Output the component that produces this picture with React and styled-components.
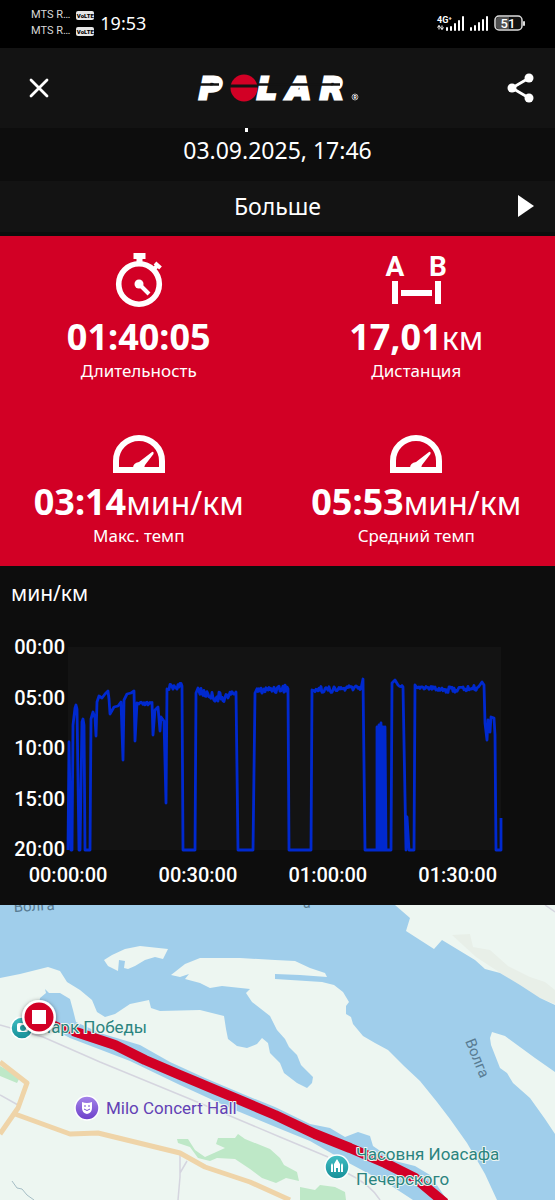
import React from "react";
import styled, { createGlobalStyle } from "styled-components";

const RED = "#d20025";

const GlobalStyle = createGlobalStyle`
  * { box-sizing: border-box; }
  body { margin: 0; background: #0d0d0d; }
  button { border: 0; padding: 0; background: none; color: inherit; font: inherit; cursor: pointer; }
  svg { display: block; overflow: visible; }
`;

const Page = styled.div`
  display: flex;
  flex-direction: column;
  min-height: 100vh;
  background: #0d0d0d;
  color: #fff;
  font-family: "Noto Sans", "Open Sans", sans-serif;
`;

/* ---------- status bar ---------- */

const StatusBar = styled.div`
  display: flex;
  align-items: center;
  justify-content: space-between;
  height: 48px;
  padding: 0 30px 2px 31px;
  background: #000;
  font-family: Roboto, sans-serif;
`;

const StatusGroup = styled.div`
  display: flex;
  align-items: center;
  gap: 6px;
`;

const Carriers = styled.div`
  display: flex;
  flex-direction: column;
`;

const Carrier = styled.div`
  display: flex;
  align-items: center;
  gap: 6px;
  font-size: 11px;
  line-height: 16px;
  color: #d8d8d8;
`;

const Volte = styled.span`
  width: 18px;
  border-radius: 2px;
  background: #e6e6e6;
  color: #000;
  font-size: 6px;
  font-weight: 900;
  line-height: 9px;
  text-align: center;
`;

const Clock = styled.time`
  font-family: "Noto Sans", sans-serif;
  font-size: 18px;
  line-height: 24px;
`;

/* ---------- header ---------- */

const Header = styled.header`
  display: flex;
  align-items: center;
  justify-content: space-between;
  height: 80px;
  padding: 0 20px 0 28px;
  background: #131313;
`;

const Summary = styled.div`
  display: flex;
  flex-direction: column;
  align-items: center;
  height: 53px;
  font-size: 23px;
  line-height: 36px;

  &::before {
    content: "";
    width: 3px;
    height: 4px;
    margin-right: 62px;
    background: #fff;
  }
`;

const MoreButton = styled.button`
  && {
    display: grid;
    grid-template-columns: 1fr auto 1fr;
    align-items: center;
    height: 51px;
    padding: 0 21px 2px;
    margin-bottom: 4px;
    background: #131313;
    font-size: 23px;
    line-height: 32px;
  }
  svg { justify-self: end; }
  span { grid-column: 2; }
`;

/* ---------- stats ---------- */

const Stats = styled.section`
  display: grid;
  grid-template-columns: 1fr 1fr;
  grid-auto-rows: 165px;
  background: ${RED};
`;

const Stat = styled.div`
  display: flex;
  flex-direction: column;
  align-items: center;
`;

const StatIcon = styled.div`
  display: flex;
  align-items: flex-end;
  height: 72px;
`;

const StatValue = styled.div`
  height: 44px;
  margin-top: 7px;
  font-size: 36px;
  line-height: 44px;
  white-space: nowrap;
  strong { font-weight: 700; }
`;

const Unit = styled.span`
  font-size: 32px;
  line-height: 32px;
`;

const StatLabel = styled.div`
  font-size: 17px;
  line-height: 24px;
`;

/* ---------- chart ---------- */

const ChartSection = styled.section`
  padding: 11px 54px 19px 11px;
`;

const ChartTitle = styled.h2`
  margin: 0 0 28px;
  font-size: 21px;
  font-weight: 400;
  line-height: 32px;
`;

const ChartGrid = styled.div`
  display: grid;
  grid-template-columns: 54px 1fr;
  column-gap: 3px;
  font-family: Roboto, sans-serif;
  font-size: 20px;
  font-weight: 500;
  line-height: 22px;
`;

const YAxis = styled.div`
  display: flex;
  flex-direction: column;
  justify-content: space-between;
  align-items: flex-end;
  height: 224px;
  margin-top: -1px;
`;

const Plot = styled.div`
  height: 203px;
  margin-top: 10px;
  background: #131313;
  svg { width: 100%; height: 100%; }
`;

const XAxis = styled.div`
  display: grid;
  grid-template-columns: repeat(4, 1fr);
  grid-column: 2;
  width: 120%;
  margin: 4px 0 0 -15%;
  text-align: center;
`;

/* ---------- map ---------- */

const MapPanel = styled.section`
  display: flex;
  flex: 1 0 295px;
  max-height: 60vw;
  overflow: hidden;
  background: #edf6f1;
  svg { width: 100%; flex: 1; }
`;

const MapText = styled.text`
  font-family: Roboto, sans-serif;
  font-size: ${(p) => p.$size || 17}px;
  fill: ${(p) => p.$color};
  stroke: #edf6f1;
  stroke-width: ${(p) => (p.$plain ? 0 : 2)}px;
  stroke-linejoin: round;
  paint-order: stroke;
`;

const LogoText = styled.text`
  font-family: "DejaVu Sans", sans-serif;
  font-size: 31px;
  font-weight: 700;
  font-style: italic;
  fill: #fff;
  stroke: #fff;
  stroke-width: 3px;
`;

const SmallIconText = styled.text`
  font-family: Roboto, sans-serif;
  font-size: ${(p) => p.$size}px;
  font-weight: ${(p) => p.$weight || 700};
  fill: #fff;
`;

function Signal() {
  return (
    <svg width="18" height="16" viewBox="0 0 18 16" fill="#fff">
      <rect x="0" y="12" width="2" height="4" rx="1" />
      <rect x="4" y="10" width="2" height="6" rx="1" />
      <rect x="8" y="7" width="2" height="9" rx="1" />
      <rect x="12" y="4" width="2" height="12" rx="1" />
      <rect x="16" y="1" width="2" height="15" rx="1" />
    </svg>
  );
}

function MobileSignal() {
  return (
    <svg width="27" height="16" viewBox="0 0 27 16" fill="#fff">
      <SmallIconText x="0" y="8" $size="9">4G⁺</SmallIconText>
      <path d="M2 10.500v4M0.500 12.500 2 10.500l1.500 2M5 10.500v4M3.500 12.500 5 14.500l1.500-2" stroke="#fff" fill="none" />
      <rect x="9" y="12" width="2" height="4" rx="1" />
      <rect x="13" y="11" width="2" height="5" rx="1" />
      <rect x="17" y="8" width="2" height="8" rx="1" />
      <rect x="21" y="5" width="2" height="11" rx="1" />
      <rect x="25" y="1" width="2" height="15" rx="1" />
    </svg>
  );
}

function Battery() {
  return (
    <svg width="31" height="16" viewBox="0 0 31 16">
      <rect x="1" y="1" width="27" height="14" rx="4" fill="#111" stroke="#ddd" strokeWidth="1.500" />
      <path d="M5 2h10v12H5q-3 0-3-3V5q0-3 3-3Z" fill="#505050" />
      <rect x="29" y="6" width="2" height="5" rx="1" fill="#ddd" />
      <SmallIconText x="14" y="13" $size="13" $weight="500" textAnchor="middle">51</SmallIconText>
    </svg>
  );
}

function PolarLogo() {
  return (
    <svg width="166" height="32" viewBox="0 0 166 32" role="img" aria-label="Polar">
      <LogoText x="3" y="27">P</LogoText>
      <LogoText x="61" y="27">L</LogoText>
      <LogoText x="91" y="27">A</LogoText>
      <LogoText x="124" y="27">R</LogoText>
      <path d="M2 12.500h21M60 12.500h84" stroke="#131313" strokeWidth="2.500" />
      <circle cx="48" cy="16" r="13.500" fill={RED} />
      <path d="M34 14h28" stroke="#131313" strokeWidth="3" />
      <circle cx="159" cy="25" r="3" fill="none" stroke="#aaa" />
      <SmallIconText x="157.500" y="27" $size="5">R</SmallIconText>
    </svg>
  );
}

function StopwatchIcon() {
  return (
    <svg width="48" height="56" viewBox="0 0 48 56">
      <circle cx="24" cy="32" r="20.300" fill="none" stroke="#fff" strokeWidth="5.600" />
      <path d="M18.500 1h12v6h-3v4h-6V7h-3Z" fill="#fff" />
      <path d="m38 18 5-5M40 11l5.500 5" stroke="#fff" strokeWidth="4" />
      <circle cx="24" cy="32" r="4.500" fill="#fff" />
      <path d="m24 32 10 10" stroke="#fff" strokeWidth="4" />
    </svg>
  );
}

function DistanceIcon() {
  return (
    <svg width="60" height="56" viewBox="0 0 60 56" fill="#fff">
      <SmallIconText x="9" y="24" $size="28" textAnchor="middle">A</SmallIconText>
      <SmallIconText x="52" y="24" $size="28" textAnchor="middle">B</SmallIconText>
      <path d="M6 29h6v23H6ZM49 29h6v23h-6ZM15 38h31v6H15Z" />
    </svg>
  );
}

function GaugeIcon() {
  return (
    <svg width="52" height="38" viewBox="0 0 52 38">
      <path d="M3 35V26a23 23 0 0 1 46 0v9Z" fill="none" stroke="#fff" strokeWidth="6" />
      <path d="M20 33q0-5 6-6L39 17q2-1 1.500 2L32 30l-1 3Z" fill="#fff" />
    </svg>
  );
}

const stats = [
  { icon: <StopwatchIcon />, value: "01:40:05", unit: "", label: "Длительность" },
  { icon: <DistanceIcon />, value: "17,01", unit: "км", label: "Дистанция" },
  { icon: <GaugeIcon />, value: "03:14", unit: "мин/км", label: "Макс. темп" },
  { icon: <GaugeIcon />, value: "05:53", unit: "мин/км", label: "Средний темп" },
];

const yTicks = ["00:00", "05:00", "10:00", "15:00", "20:00"];
const xTicks = ["00:00:00", "00:30:00", "01:00:00", "01:30:00"];

/* A steady stretch of running: a line from y1 to y2 with an irregular ripple. */
function steady(x1, x2, y1, y2, amp) {
  const points = [];
  for (let x = x1; x <= x2; x += 1) {
    const t = (x - x1) / (x2 - x1);
    const noise = Math.sin(x * 12.9898) * 43758.5453;
    const ripple = (noise - Math.floor(noise) - 0.5) * 2 * amp;
    points.push([x, y1 + (y2 - y1) * t + ripple]);
  }
  return points;
}

const pace = [
  [0, 203], [1, 95], [3, 203], [4, 203], [5, 78], [7, 61], [8, 58], [9, 62], [11, 203], [12, 203],
  [14, 75], [15, 72], [16, 78], [17, 203], [22, 203], [23, 72], [25, 65], [27, 71], [28, 89],
  [29, 55], [31, 49], [34, 51], [37, 47], [40, 44], [41, 52], [42, 67], [46, 60], [50, 59],
  [53, 55], [55, 113], [56, 53], [59, 47], [63, 46], [66, 44], [67, 94], [69, 56],
  ...steady(71, 84, 57, 57, 2), [85, 88], [87, 63], [90, 60], [92, 84], [93, 70], [96, 74],
  [98, 156], [99, 42], ...steady(101, 114, 40, 39, 3), [115, 203], [127, 203], [128, 46], [130, 41],
  ...steady(132, 145, 45, 49, 4), ...steady(146, 158, 50, 50, 5), ...steady(159, 168, 49, 45, 3),
  [170, 203], [185, 203], [187, 46], ...steady(189, 205, 44, 42, 3), ...steady(206, 220, 42, 41, 4),
  [221, 203], [243, 203], [244, 43], ...steady(246, 270, 42, 43, 3), ...steady(271, 293, 42, 40, 3),
  [295, 32], [297, 203], [309, 203], [309, 80], [310, 203], [311, 78], [312, 203], [313, 76],
  [314, 203], [315, 80], [316, 203], [317, 80], [318, 203], [323, 203], [324, 36], [327, 33],
  [330, 38], ...steady(331, 335, 39, 39, 1), [337, 150], [338, 203], [339, 170], [341, 203],
  [346, 203], [347, 38], ...steady(349, 375, 40, 42, 2), ...steady(376, 411, 43, 41, 3),
  [414, 35], [416, 38], [417, 76], [419, 93], [420, 73], [422, 85], [423, 70], [426, 71], [427, 88],
  [428, 203], [433, 203], [433, 171],
];

const paceLine = pace.map(([x, y]) => `${x},${y.toFixed(1)}`).join(" ");

function RouteMap() {
  const water = "#a0ceeb";
  const land = "#edf6f1";
  return (
    <svg viewBox="0 905 555 295" preserveAspectRatio="xMidYMid slice">
      <defs>
        <linearGradient id="teal" x2="0" y2="1">
          <stop stopColor="#42bfc4" />
          <stop offset="1" stopColor="#168f98" />
        </linearGradient>
        <linearGradient id="purple" x2="0" y2="1">
          <stop stopColor="#a585ea" />
          <stop offset="1" stopColor="#6c3fc9" />
        </linearGradient>
        <filter id="shadow" x="-40%" y="-40%" width="180%" height="180%">
          <feDropShadow dx="0" dy="1" stdDeviation="2" floodOpacity="0.5" />
        </filter>
      </defs>

      <rect y="905" width="555" height="295" fill={land} />
      <path d="M452 935 470 934 473 947 490 950 508 966 530 977 545 982 555 990V1004L530 994 502 974 476 957Z" fill="#e8efe8" />
      <path
        fill={water}
        d="M0 905H395L410 918 406 931 434 949 442 940 475 960 485 969 500 973 520 985 540 998 555 1005V1072L535 1058 505 1036 492 1032 490 1038 491 1045 500 1068 507 1073 513 1083 530 1098 545 1119 555 1134V1200H497L485 1174 467 1143 450 1119 437 1102 420 1081 404 1066 388 1050 375 1043 363 1036 353 1024 351 1017 346 1014V1006L349 1002 343 992 334 985 322 982 275 979 275 974 300 975 327 977 325 973 310 968 295 961 275 960 240 958 200 958 185 964 171 975 180 977 189 974 185 979 200 983 210 988 222 986 250 989 246 993 252 1002 270 1016 277 1030 285 1039 289 1047 297 1055 301 1065 313 1077 312 1083 307 1088 297 1083 284 1073 280 1063 270 1053 268 1043 262 1038 257 1044 247 1048 237 1046 228 1039 226 1029 224 1016 200 1010 160 1011 151 1008 149 1000 130 1004 115 1014 105 1017 97 1012 92 1000 80 990 67 982 60 971 48 967 20 974 0 978Z"
      />
      <path d="M104 960 112 955 125 949 140 946 168 949 163 959 155 957 145 960 135 966 128 969 124 968 125 961 119 960 118 971 108 966Z" fill={land} />
      <path
        fill={water}
        d="M40 998 46 993 45 989 49 993H60L70 999 73 1010 76 1022 100 1033 140 1045 170 1062 205 1078 250 1097 275 1107 310 1124 330 1128 345 1137 358 1132 370 1136 373 1146 395 1161 415 1166 430 1175 447 1200H413L390 1185 345 1161 310 1141 278 1128 230 1108 180 1085 130 1061 70 1038 45 1025 38 1012Z"
      />

      <path d="M0 1066 20 1077 17 1083 0 1076ZM177 1139H188L195 1150 205 1157 214 1153 225 1148 216 1144 218 1138H235L238 1134 245 1139 270 1149 280 1158 284 1165 297 1172 299 1181 286 1178 276 1183 262 1178 250 1169 235 1159 217 1158 210 1161 198 1158 190 1147 178 1143ZM300 1187 315 1190 320 1185 335 1187 345 1192 346 1200H300Z" fill="#bee8c7" />
      <g fill="none" strokeLinejoin="round">
        <path d="M0 1025 43 1037 100 1062 190 1099 280 1137 328 1157M347 1173Q370 1184 380 1200M0 1095 18 1105M180 1155V1177L178 1200M187 1161 180 1173M545 905 555 912" stroke="#d5d5df" strokeWidth="1.500" />
        <path d="M0 1062 27 1083 18 1108 0 1134M15 1114 70 1134 98 1133 180 1153 205 1167 250 1182 290 1200" stroke="#efd4a8" strokeWidth="5" />
        <path d="M12 1181 17 1188 22 1189 27 1195 34 1200" stroke="#a5bdc5" />
        <path d="M48 1021 80 1035" stroke={RED} strokeWidth="6" />
        <path d="M73 1031 115 1045 145 1060 180 1075 235 1098 275 1115 315 1134 350 1148 385 1163 415 1178 445 1203" stroke={RED} strokeWidth="10" />
      </g>

      <MapText x="14" y="912" $size="15" $color="#587b92" $plain transform="rotate(-3 14 912)">Волга</MapText>
      <MapText x="303" y="908" $size="14" $color="#587b92" $plain>а</MapText>
      <MapText x="465" y="1041" $size="15" $color="#587b92" $plain transform="rotate(68 465 1041)">Волга</MapText>

      <circle cx="22" cy="1028" r="11" fill="url(#teal)" stroke="#fff" strokeWidth="1.500" />
      <rect x="17" y="1023" width="11" height="9" rx="2" fill="#fff" />
      <circle cx="23" cy="1028" r="3" fill="#25989c" />
      <MapText x="39" y="1033" $color="#2b847f">Парк Победы</MapText>

      <circle cx="39" cy="1017" r="17" fill="#fff" filter="url(#shadow)" />
      <circle cx="39" cy="1017" r="14.500" fill={RED} />
      <rect x="32" y="1010" width="14" height="14" fill="#fff" />

      <circle cx="87" cy="1108" r="12" fill="url(#purple)" stroke="#fff" strokeWidth="1.500" />
      <path d="M82 1102q5 2 10 0v6q0 5-5 6-5-1-5-6Z" fill="#fff" />
      <path d="M84 1106h2m2 0h2m-6 3q3 3 6 0" fill="none" stroke="#7951ce" />
      <MapText x="106" y="1114" $color="#6241b5">Milo Concert Hall</MapText>

      <circle cx="337" cy="1167" r="12" fill="url(#teal)" stroke="#fff" strokeWidth="1.500" />
      <path d="M331 1172v-7l1-2 1 2v7ZM341 1172v-7l1-2 1 2v7ZM334 1172v-8l3-5 3 5v8h-2v-4h-2v4Z" fill="#fff" />
      <MapText x="356" y="1160" $color="#2b847f">Часовня Иоасафа</MapText>
      <MapText x="356" y="1185" $color="#2b847f">Печерского</MapText>
    </svg>
  );
}

export default function App() {
  return (
    <Page>
      <GlobalStyle />
      <StatusBar>
        <StatusGroup>
          <Carriers>
            <Carrier>MTS R… <Volte>VoLTE</Volte></Carrier>
            <Carrier>MTS R… <Volte>VoLTE</Volte></Carrier>
          </Carriers>
          <Clock>19:53</Clock>
        </StatusGroup>
        <StatusGroup>
          <MobileSignal />
          <Signal />
          <Battery />
        </StatusGroup>
      </StatusBar>

      <Header>
        <button type="button" aria-label="Закрыть">
          <svg width="22" height="22" viewBox="0 0 22 22">
            <path d="m3 3 16 16M19 3 3 19" stroke="#fff" strokeWidth="2.800" strokeLinecap="round" />
          </svg>
        </button>
        <PolarLogo />
        <button type="button" aria-label="Поделиться">
          <svg width="28" height="30" viewBox="0 0 28 30">
            <path d="M22 5 5 15l17 10" fill="none" stroke="#fff" strokeWidth="2.800" />
            <circle cx="22" cy="5" r="4.500" fill="#fff" />
            <circle cx="5" cy="15" r="4.500" fill="#fff" />
            <circle cx="22" cy="25" r="4.500" fill="#fff" />
          </svg>
        </button>
      </Header>

      <Summary>
        <time dateTime="2025-09-03T17:46">03.09.2025, 17:46</time>
      </Summary>
      <MoreButton type="button">
        <span>Больше</span>
        <svg width="16" height="22" viewBox="0 0 16 22"><path d="M0 0 16 11 0 22Z" fill="#fff" /></svg>
      </MoreButton>

      <Stats>
        {stats.map((s) => (
          <Stat key={s.label}>
            <StatIcon>{s.icon}</StatIcon>
            <StatValue><strong>{s.value}</strong>{s.unit && <Unit>{s.unit}</Unit>}</StatValue>
            <StatLabel>{s.label}</StatLabel>
          </Stat>
        ))}
      </Stats>

      <ChartSection>
        <ChartTitle>мин/км</ChartTitle>
        <ChartGrid>
          <YAxis>{yTicks.map((t) => <span key={t}>{t}</span>)}</YAxis>
          <Plot>
            <svg viewBox="0 0 433 203" preserveAspectRatio="none">
              <polyline points={paceLine} fill="none" stroke="#0029cf" strokeWidth="2.800" strokeLinejoin="round" vectorEffect="non-scaling-stroke" />
            </svg>
          </Plot>
          <XAxis>{xTicks.map((t) => <span key={t}>{t}</span>)}</XAxis>
        </ChartGrid>
      </ChartSection>

      <MapPanel>
        <RouteMap />
      </MapPanel>
    </Page>
  );
}
